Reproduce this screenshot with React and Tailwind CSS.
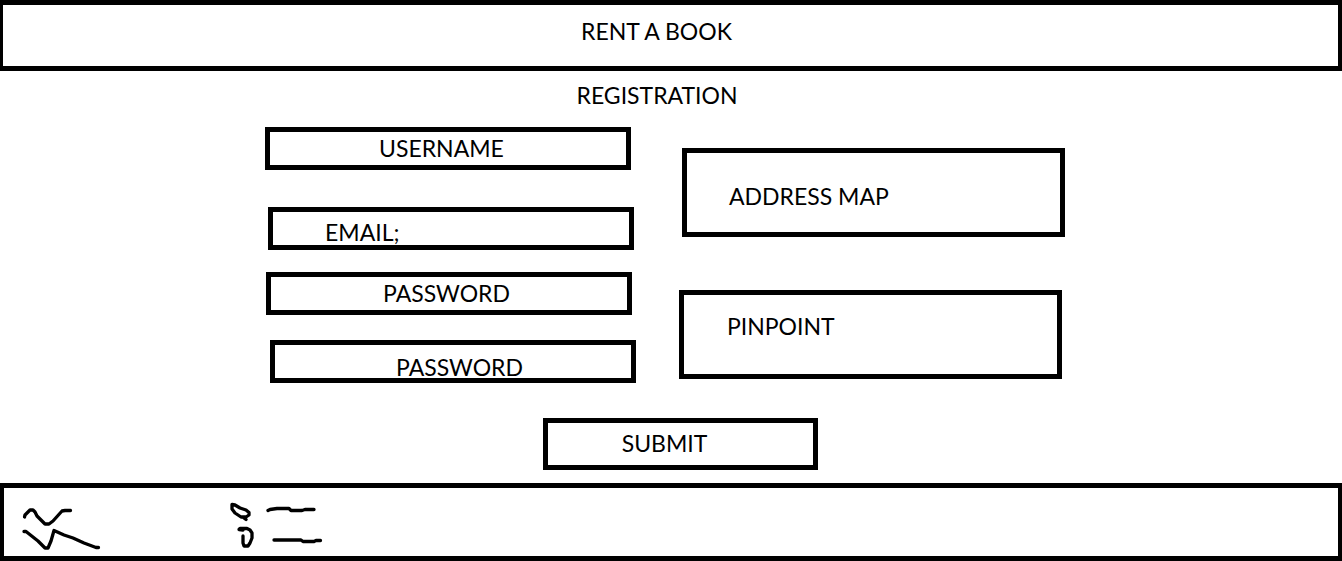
function Field({ name, label, type = 'text', className }) {
  return (
    <label className={`flex h-[43px] w-full max-w-[366px] items-start border-[5px] border-black bg-white ${className}`}>
      <span className="shrink-0">{label}</span>
      <input name={name} type={type} className="h-8 min-w-0 flex-1 bg-transparent px-2 outline-none" />
    </label>
  );
}

function Panel({ title, className }) {
  return (
    <section className={`h-[89px] w-full max-w-[383px] border-[5px] border-black ${className}`}>
      <h3>{title}</h3>
    </section>
  );
}

export default function App() {
  return (
    <div className="flex min-h-screen flex-col bg-white font-['Lato',sans-serif] text-[23px] leading-8 text-black">
      <header className="border-y-[5px] border-r-4 border-l-[3px] border-black pt-2.5 pr-7 pb-[19px] text-center">
        <h1>RENT A BOOK</h1>
      </header>

      <main className="flex-1 pb-3">
        <h2 className="pt-2 pr-7 text-center">REGISTRATION</h2>
        <form className="pt-4 pr-3" onSubmit={(e) => e.preventDefault()}>
          <div className="mx-auto w-full max-w-[800px]">
            <div className="grid grid-cols-[371fr_386fr] gap-[43px]">
              <div className="flex flex-col">
                <Field name="username" label="USERNAME" className="pl-[109px]" />
                <div className="pt-[37px]">
                  <Field name="email" label="EMAIL;" type="email" className="ml-[3px] pt-1 pl-[52px]" />
                </div>
                <div className="pt-[22px]">
                  <Field name="password" label="PASSWORD" type="password" className="ml-px pl-28" />
                </div>
                <div className="pt-[25px]">
                  <Field name="confirm" label="PASSWORD" type="password" className="ml-[5px] pt-1.5 pl-[121px]" />
                </div>
              </div>
              <div className="flex flex-col gap-[53px] pt-[21px]">
                <Panel title="ADDRESS MAP" className="ml-[3px] pt-[27px] pl-[42px]" />
                <Panel title="PINPOINT" className="pt-[15px] pl-[43px]" />
              </div>
            </div>
            <div className="flex pt-[35px] pl-[278px]">
              <button
                type="submit"
                className="h-[52px] w-full max-w-[275px] border-[5px] border-black pr-8 pb-0.5 text-center"
              >
                SUBMIT
              </button>
            </div>
          </div>
        </form>
      </main>

      <footer className="flex gap-32 border-x-4 border-y-[5px] border-black px-4 py-3">
        <svg
          width="80" height="44" viewBox="20 500 80 44"
          className="overflow-visible" fill="none" stroke="currentColor" strokeWidth="3.3"
          strokeLinecap="round" strokeLinejoin="round" aria-hidden="true"
        >
          <path d="M24.500 517 L25 515 L30 510 H33 L35 512 L37 516 L45 524 H49 L53 521 L62 511 L65 510.500 H70.500" />
          <path d="M24 531.500 H26 L38 541 L45 548 H48 L51 541 L54 530.500 L64 535 L73 538 L84 543 L96 547.500 H98.500" />
        </svg>
        <svg
          width="94" height="44" viewBox="228 500 94 44"
          className="overflow-visible" fill="none" stroke="currentColor" strokeWidth="3.3"
          strokeLinecap="round" strokeLinejoin="round" aria-hidden="true"
        >
          <path d="M232 504.500 L235 505 L240 508 L246 510 L249 512.500 V515 L246 517 H241 L235 513 L232 509 Z M244 518 L246 519.500" />
          <path d="M243 530 L239 529.500 L240 528.500 H247 L250 530 L252 533 V538 L250 543 L248 546 H244 L243 543 V536" />
          <path d="M268 510.500 L270 509.500 L277 508.500 H289 L291 510.500 H302 L305 509.500 H314" />
          <path d="M274 540 H301 L303 541.500 H314 L316 540.500 H320.500" />
        </svg>
      </footer>
    </div>
  );
}
